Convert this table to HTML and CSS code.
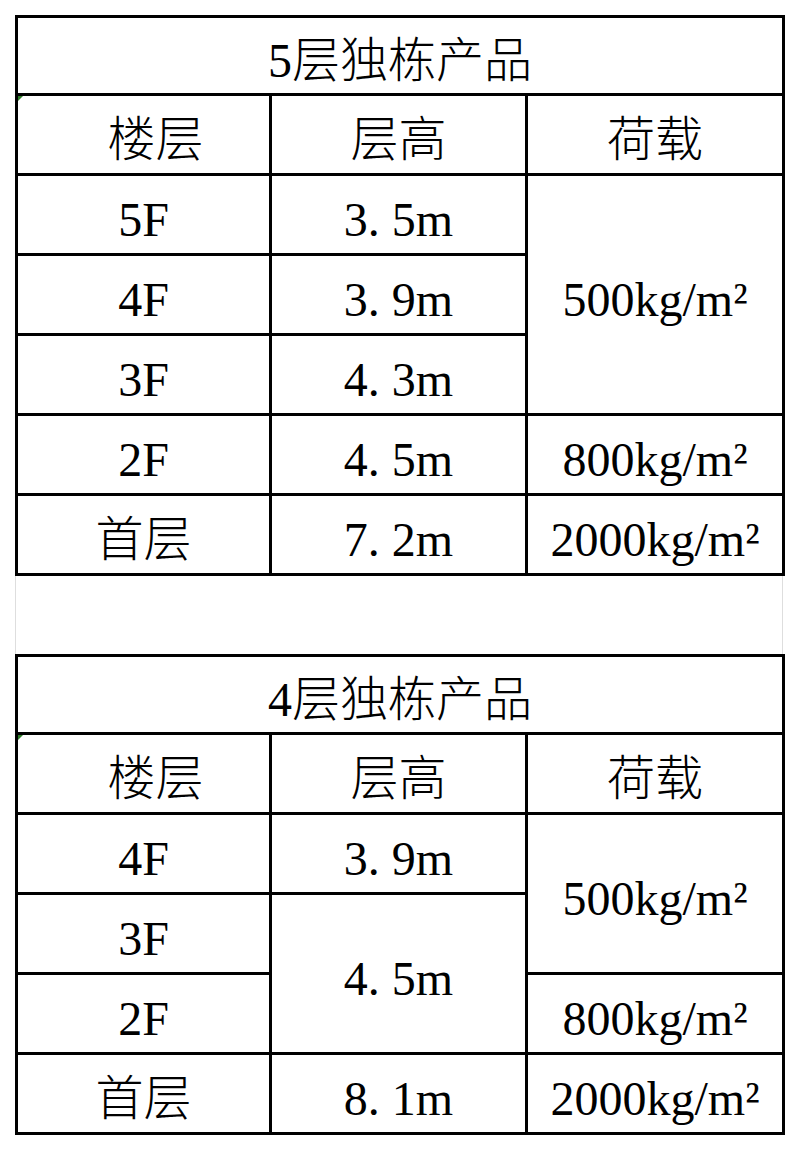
FILE: index.html
```html
<!DOCTYPE html>
<html lang="zh-CN">
<head>
<meta charset="utf-8">
<title>独栋产品</title>
<link rel="stylesheet" href="styles.css">
</head>
<body>
<div class="page">
  <div class="sheet rows7">
    <div class="cell title">5层独栋产品</div>
    <div class="cell head first">楼层</div>
    <div class="cell head">层高</div>
    <div class="cell head">荷载</div>
    <div class="cell">5F</div>
    <div class="cell">3<span class="dot">.</span>5m</div>
    <div class="cell span3">500kg/m²</div>
    <div class="cell">4F</div>
    <div class="cell">3<span class="dot">.</span>9m</div>
    <div class="cell">3F</div>
    <div class="cell">4<span class="dot">.</span>3m</div>
    <div class="cell">2F</div>
    <div class="cell">4<span class="dot">.</span>5m</div>
    <div class="cell">800kg/m²</div>
    <div class="cell">首层</div>
    <div class="cell">7<span class="dot">.</span>2m</div>
    <div class="cell">2000kg/m²</div>
  </div>
  <div class="spacer"></div>
  <div class="sheet rows6">
    <div class="cell title">4层独栋产品</div>
    <div class="cell head first">楼层</div>
    <div class="cell head">层高</div>
    <div class="cell head">荷载</div>
    <div class="cell">4F</div>
    <div class="cell">3<span class="dot">.</span>9m</div>
    <div class="cell span2">500kg/m²</div>
    <div class="cell">3F</div>
    <div class="cell span2">4<span class="dot">.</span>5m</div>
    <div class="cell">2F</div>
    <div class="cell">800kg/m²</div>
    <div class="cell">首层</div>
    <div class="cell">8<span class="dot">.</span>1m</div>
    <div class="cell">2000kg/m²</div>
  </div>
</div>
</body>
</html>
```

FILE: styles.css
```css
html, body {
  margin: 0;
  padding: 0;
  background: #ffffff;
}

.page {
  padding: 15px 0 0 15px;
  width: 770px;
}

.sheet {
  display: grid;
  grid-template-columns: 251px 253px 254px;
  gap: 3px;
  padding: 3px;
  background: #000000;
}

.rows7 {
  grid-template-rows: 75px repeat(6, 77px);
}

.rows6 {
  grid-template-rows: 75px repeat(5, 77px);
}

.cell {
  background: #ffffff;
  display: flex;
  align-items: center;
  justify-content: center;
  padding-top: 10px;
  box-sizing: border-box;
  font-family: "Liberation Serif", "Noto Sans CJK SC", serif;
  font-size: 48px;
  font-weight: 300;
  color: #000000;
  line-height: 1;
  white-space: nowrap;
  position: relative;
}

.title {
  grid-column: span 3;
}

.first {
  padding-left: 24px;
}

.first::before {
  content: "";
  position: absolute;
  left: 0;
  top: 0;
  width: 0;
  height: 0;
  border-top: 5px solid #2f7d2a;
  border-right: 5px solid transparent;
}

.span3 {
  grid-row: span 3;
}

.span2 {
  grid-row: span 2;
}

.dot {
  letter-spacing: 0.25em;
}

.spacer {
  height: 78px;
  border-left: 1px solid #dedede;
  border-right: 1px solid #dedede;
  margin-right: 2px;
}
```
